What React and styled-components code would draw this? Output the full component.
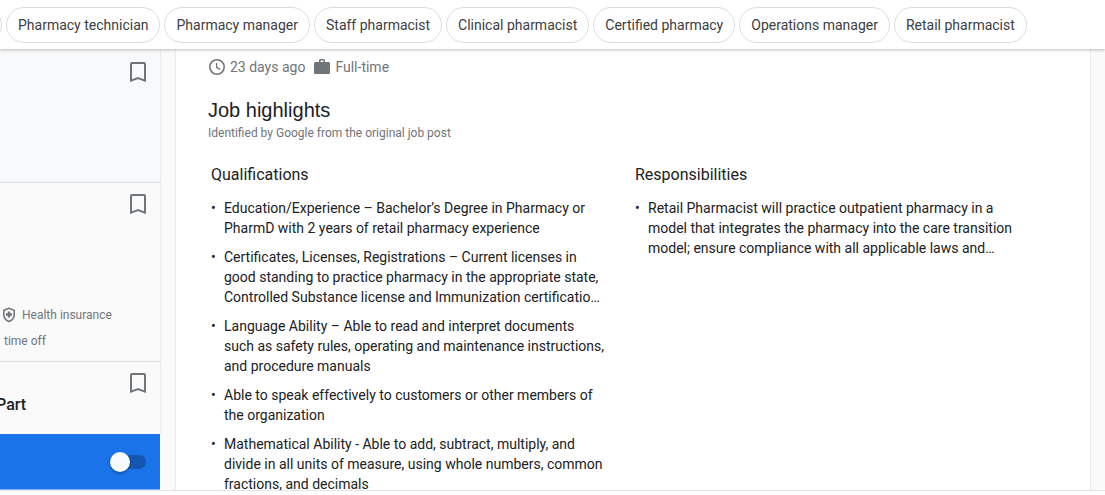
import React, { useState } from "react";
import styled, { createGlobalStyle } from "styled-components";

const chips = [
  "Pharmacy technician",
  "Pharmacy manager",
  "Staff pharmacist",
  "Clinical pharmacist",
  "Certified pharmacy",
  "Operations manager",
  "Retail pharmacist",
];

const highlights = [
  {
    title: "Qualifications",
    items: [
      "Education/Experience – Bachelor’s Degree in Pharmacy or PharmD with 2 years of retail pharmacy experience",
      "Certificates, Licenses, Registrations – Current licenses in good standing to practice pharmacy in the appropriate state, Controlled Substance license and Immunization certificatio…",
      "Language Ability – Able to read and interpret documents such as safety rules, operating and maintenance instructions, and procedure manuals",
      "Able to speak effectively to customers or other members of the organization",
      "Mathematical Ability - Able to add, subtract, multiply, and divide in all units of measure, using whole numbers, common fractions, and decimals",
    ],
  },
  {
    title: "Responsibilities",
    items: [
      "Retail Pharmacist will practice outpatient pharmacy in a model that integrates the pharmacy into the care transition model; ensure compliance with all applicable laws and…",
    ],
  },
];

const Bookmark = () => (
  <SaveButton aria-label="Save job">
    <svg width="16" height="20" viewBox="0 0 16 20" fill="none">
      <path
        d="M1 18.6V2a1 1 0 0 1 1-1h12a1 1 0 0 1 1 1v16.6L8 16z"
        stroke="#70757a"
        strokeWidth="2"
      />
    </svg>
  </SaveButton>
);

const Clock = () => (
  <svg width="18" height="18" viewBox="0 0 18 18" fill="none">
    <circle cx="9" cy="9" r="7.2" stroke="#70757a" strokeWidth="1.6" />
    <path d="M8.7 5v4.3l3.4 2.1" stroke="#70757a" strokeWidth="1.3" />
  </svg>
);

const Briefcase = () => (
  <svg width="17" height="18" viewBox="0 0 17 18">
    <path
      fill="#70757a"
      fillRule="evenodd"
      d="M5 4V2.500C5 1.600 5.600 1 6.500 1h3c.9 0 1.500.6 1.500 1.500V4h3.400c.9 0 1.600.7 1.600 1.600v8.800c0 .9-.7 1.600-1.600 1.600H1.600C.7 16 0 15.300 0 14.400V5.600C0 4.700.7 4 1.600 4zM6.500 4h3V2.500h-3z"
    />
  </svg>
);

const Shield = () => (
  <svg width="14" height="16" viewBox="0 0 14 16" fill="none">
    <path
      d="M7 1.300L1.800 3.200v4.300c0 3.200 2.200 5.900 5.200 6.900 3-1 5.200-3.700 5.200-6.900V3.200z"
      stroke="#70757a"
      strokeWidth="1.600"
    />
    <path d="M7 4.500v6M4 7.500h6" stroke="#70757a" strokeWidth="2.400" />
  </svg>
);

const App = () => {
  const [alertOn, setAlertOn] = useState(false);

  return (
    <Page>
      <GlobalStyle />
      <Header>
        <ChipList>
          <Chip $first>Pharmacist</Chip>
          {chips.map((chip) => (
            <Chip key={chip}>{chip}</Chip>
          ))}
        </ChipList>
      </Header>
      <Body>
        <Sidebar>
          <Job $height={132} $selected>
            <Bookmark />
          </Job>
          <Job $height={179}>
            <Bookmark />
            <Benefits>
              <Benefit>
                <Shield />
                Health insurance
              </Benefit>
              <Benefit $wrapped>time off</Benefit>
            </Benefits>
          </Job>
          <Job $height={72} $last>
            <Bookmark />
            <JobTitle>Part</JobTitle>
          </Job>
          <AlertBar>
            <Switch
              type="checkbox"
              role="switch"
              aria-label="Turn on alerts"
              checked={alertOn}
              onChange={(e) => setAlertOn(e.target.checked)}
            />
          </AlertBar>
        </Sidebar>
        <Details>
          <Meta>
            <Clock />
            <span>23 days ago</span>
            <Briefcase />
            <span>Full-time</span>
          </Meta>
          <Title>Job highlights</Title>
          <Source>Identified by Google from the original job post</Source>
          <Columns>
            {highlights.map(({ title, items }) => (
              <section key={title}>
                <ColumnTitle>{title}</ColumnTitle>
                <List>
                  {items.map((item) => (
                    <Item key={item}>{item}</Item>
                  ))}
                </List>
              </section>
            ))}
          </Columns>
        </Details>
      </Body>
      <Footer />
    </Page>
  );
};

export default App;

const GlobalStyle = createGlobalStyle`
  * {
    box-sizing: border-box;
  }
  body {
    margin: 0;
    font-family: Roboto, Arial, sans-serif;
    font-size: 14px;
    line-height: 20px;
    color: #202124;
    background: #fff;
  }
`;

const Page = styled.div`
  display: flex;
  flex-direction: column;
  height: 100vh;
  overflow: hidden;
`;

const Header = styled.header`
  position: relative;
  z-index: 1;
  flex: none;
  padding: 7px 0 6px;
  background: #fff;
  overflow: hidden;
  box-shadow: 0 1px 3px rgba(0, 0, 0, 0.25);
`;

const ChipList = styled.div`
  display: flex;
  gap: 4px;
  margin-left: -98px;
`;

const Chip = styled.button`
  flex: none;
  width: ${({ $first }) => ($first ? "100px" : "auto")};
  height: 36px;
  padding: 0 11px;
  border: 1px solid #dadce0;
  border-radius: 18px;
  background: #fff;
  color: #3c4043;
  font: inherit;
  white-space: nowrap;
  cursor: pointer;
`;

const Body = styled.div`
  display: flex;
  flex: 1;
  min-height: 0;
  overflow: hidden;
  background: #fafafa;
`;

const Sidebar = styled.aside`
  flex: none;
  display: flex;
  flex-direction: column;
  width: 161px;
  padding-top: 2px;
  overflow: hidden;
`;

const Job = styled.article`
  flex: none;
  display: flex;
  flex-direction: column;
  height: ${({ $height }) => $height}px;
  padding-top: 11px;
  border-right: 1px solid #ebebeb;
  border-bottom: ${({ $last }) => ($last ? "none" : "1px solid #dadce0")};
  background: ${({ $selected }) => ($selected ? "#f8f9fb" : "#fafafa")};
`;

const SaveButton = styled.button`
  display: flex;
  align-self: flex-end;
  margin-right: 14px;
  padding: 0;
  border: none;
  background: none;
  cursor: pointer;
`;

const Benefits = styled.div`
  display: flex;
  flex-direction: column;
  gap: 10px;
  margin-top: auto;
  padding-bottom: 12px;
`;

const Benefit = styled.div`
  display: flex;
  align-items: center;
  gap: 6px;
  padding-left: ${({ $wrapped }) => ($wrapped ? "4px" : "2px")};
  font-size: 12px;
  line-height: 16px;
  color: #70757a;
`;

const JobTitle = styled.h3`
  margin: 0 0 0 -4px;
  font-size: 16px;
  font-weight: 500;
  line-height: 24px;
`;

const AlertBar = styled.div`
  flex: none;
  display: flex;
  align-items: center;
  justify-content: flex-end;
  height: 56px;
  margin-right: 1px;
  padding-right: 14px;
  border-bottom: 1px solid #8ab4f8;
  background: #1a73e8;
`;

const Switch = styled.input`
  appearance: none;
  display: flex;
  align-items: center;
  width: 32px;
  height: 14px;
  margin: 0;
  border-radius: 7px;
  background: #1557b0;
  cursor: pointer;

  &::before {
    content: "";
    flex: none;
    width: 20px;
    height: 20px;
    margin-left: ${({ checked }) => (checked ? "16px" : "-4px")};
    border-radius: 50%;
    background: #f8f9fa;
    box-shadow: 0 1px 3px rgba(0, 0, 0, 0.4);
  }
`;

const Details = styled.main`
  flex: 1;
  min-width: 0;
  margin: 0 14px;
  padding: 8px 31px 0 32px;
  border: solid #e8eaed;
  border-width: 0 1px;
  background: #fff;
  overflow: hidden;
`;

const Meta = styled.div`
  display: flex;
  align-items: center;
  gap: 4px;
  color: #70757a;

  span {
    margin-right: 5px;
  }
`;

const Title = styled.h2`
  margin: 21px 0 0;
  font-family: "Liberation Sans", Arial, sans-serif;
  font-size: 20px;
  font-weight: 400;
  line-height: 24px;
`;

const Source = styled.div`
  margin-top: 3px;
  font-size: 12px;
  line-height: 16px;
  color: #70757a;
`;

const Columns = styled.div`
  display: grid;
  grid-template-columns: 1fr 1fr;
  margin-top: 22px;
  padding-left: 3px;
`;

const ColumnTitle = styled.h3`
  margin: 0 0 11px;
  font-size: 16px;
  font-weight: 400;
  line-height: 24px;
`;

const List = styled.ul`
  margin: 0;
  padding: 0 30px 0 0;
  list-style: none;
`;

const Item = styled.li`
  display: flex;
  margin-bottom: 9px;

  &::before {
    content: "•";
    flex: none;
    width: 13px;
  }
`;

const Footer = styled.footer`
  flex: none;
  height: 5px;
  border-top: 1px solid #e4e4e4;
  background: #fff;
`;
